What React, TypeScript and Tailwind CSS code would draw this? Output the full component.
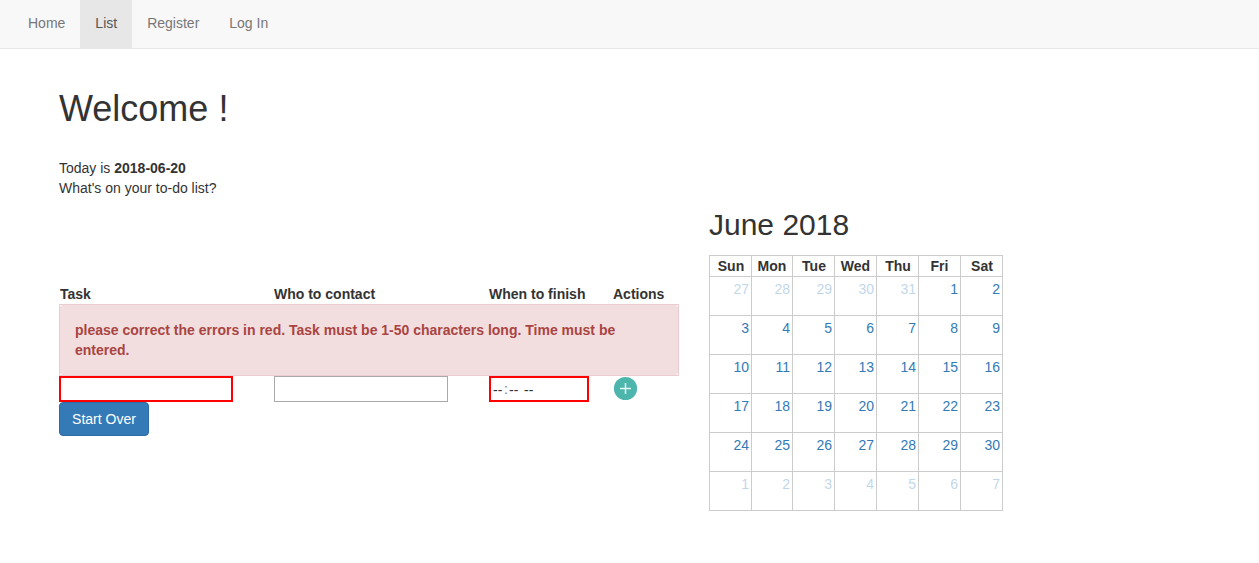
const navItems = ["Home", "List", "Register", "Log In"];
const dayNames = ["Sun", "Mon", "Tue", "Wed", "Thu", "Fri", "Sat"];
const days = Array.from({ length: 42 }, (_, i) => {
  if (i < 5) return { day: 27 + i, outside: true };
  if (i < 35) return { day: i - 4, outside: false };
  return { day: i - 34, outside: true };
});

function NavBar() {
  return (
    <nav className="flex h-[49px] border-b border-[#e7e7e7] bg-[#f8f8f8] pl-[13px]">
      {navItems.map((item) => (
        <a
          key={item}
          href="#"
          className={
            item === "List"
              ? "h-12 bg-[#e7e7e7] px-[15px] pt-[13px] text-[#555]"
              : "h-12 px-[15px] pt-[13px] text-[#777]"
          }
        >
          {item}
        </a>
      ))}
    </nav>
  );
}

function TaskForm() {
  return (
    <section className="w-[620px] pt-[86px]">
      <div className="grid h-5 grid-cols-[214px_215px_124px_1fr] pl-px font-bold">
        <span>Task</span>
        <span>Who to contact</span>
        <span>When to finish</span>
        <span>Actions</span>
      </div>
      <div className="h-[72px] border border-[#ebccd1] bg-white">
        <div className="h-[70px] rounded-[3px] bg-[#f2dede] p-[15px] font-bold text-[#a94442]">
          please correct the errors in red. Task must be 1-50 characters long. Time must be entered.
        </div>
      </div>
      <div className="grid h-[26px] grid-cols-[215px_215px_124px_1fr]">
        <input aria-label="Task" className="h-[26px] w-[174px] border-2 border-[#f00] bg-white px-px outline-none" />
        <input aria-label="Who to contact" className="h-[26px] w-[174px] border border-[#a9a9a9] bg-white px-px outline-none" />
        <div className="flex h-[26px] w-[100px] border-2 border-[#f00] bg-white pt-[2px] pl-[2px] leading-5">
          <span className="w-[11px]">--</span>
          <span className="-mt-px w-[5px] text-[#777]">:</span>
          <span className="w-[15px]">--</span>
          <span>--</span>
        </div>
        <button aria-label="Add task" className="h-[25px] w-6">
          <svg width="25" height="25" viewBox="0 0 25 25" className="block max-w-none">
            <circle cx="12.5" cy="12.5" r="11.6" fill="#4db6ac" />
            <path d="M12.5 7v11M7 12.5h11" stroke="#e4f5f3" strokeWidth="1.5" />
          </svg>
        </button>
      </div>
      <button className="block h-[34px] w-[90px] rounded-[4px] border border-[#2e6da4] bg-[#337ab7] text-center text-white">
        Start Over
      </button>
    </section>
  );
}

function Calendar() {
  return (
    <section className="w-[294px]">
      <h2 className="h-[57px] pt-[10px] text-[30px] leading-[33px]">June 2018</h2>
      <div className="grid grid-cols-[42px_41px_42px_42px_42px_42px_42px] border-t border-l border-[#ccc]">
        {dayNames.map((name) => (
          <div
            key={name}
            className={
              ["Tue", "Thu", "Sat", "Sun"].includes(name)
                ? "h-[21px] border-r border-b border-[#ccc] pl-px text-center font-bold"
                : "h-[21px] border-r border-b border-[#ccc] text-center font-bold"
            }
          >
            {name}
          </div>
        ))}
        {days.map(({ day, outside }, i) => (
          <div key={i} className="h-[39px] border-r border-b border-[#ccc] pt-[2px] pr-[2px] text-right">
            <a href="#" className={outside ? "text-[#337ab7] opacity-30" : "text-[#337ab7]"}>
              {day}
            </a>
          </div>
        ))}
      </div>
    </section>
  );
}

export default function App() {
  return (
    <div className="min-h-[563px] bg-white font-['Liberation_Sans',Arial,sans-serif] text-[14px] leading-5 text-[#333]">
      <NavBar />
      <main className="pt-[40px] pl-[59px]">
        <h1 className="h-[69px] text-[36px] leading-10">Welcome !</h1>
        <p>
          Today is <b>2018-06-20</b>
        </p>
        <p>What's on your to-do list?</p>
        <div className="flex items-start gap-[30px]">
          <TaskForm />
          <Calendar />
        </div>
      </main>
    </div>
  );
}
